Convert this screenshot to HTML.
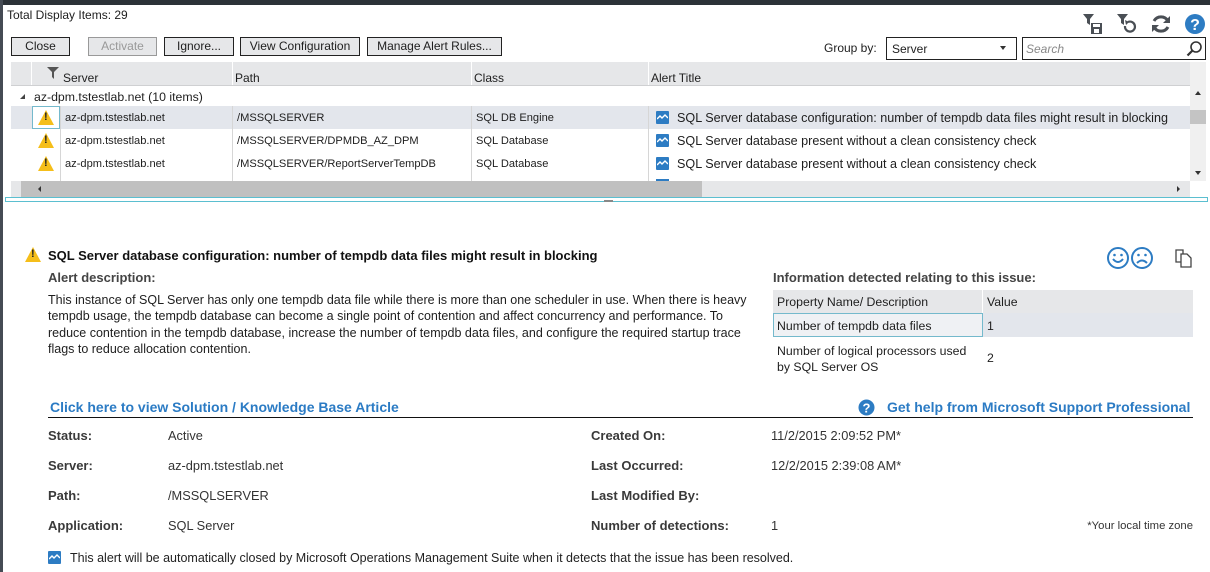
<!DOCTYPE html>
<html><head><meta charset="utf-8"><style>
*{margin:0;padding:0;box-sizing:border-box}
body{width:1210px;height:572px;overflow:hidden;background:#fff;font-family:"Liberation Sans",Arial,sans-serif;font-size:12px;color:#1e1e1e;position:relative}
.a{position:absolute;white-space:nowrap}
.btn{position:absolute;top:37px;height:19px;border:1px solid #222;background:#e6e7e9;text-align:center;line-height:17px;font-size:12px}
.hd{position:absolute;top:62px;height:24px;background:#e6e7e9}
.c{position:absolute;line-height:23px;font-size:11.1px}
.vl{position:absolute;width:1px;background:#d6d6d6}
.warn{position:absolute;width:0;height:0;border-left:8px solid transparent;border-right:8px solid transparent;border-bottom:15px solid #f5be1a}
.warn:after{content:"!";position:absolute;left:-2px;top:1px;font:bold 11px "Liberation Sans",sans-serif;color:#222}
.ai{position:absolute;width:13px;height:13px;background:#2d7cc3;border-radius:1px}
.ai svg{position:absolute;left:1px;top:2px}
.lb{position:absolute;font-weight:bold;color:#3a3a3a;font-size:13px;line-height:14px;white-space:nowrap}
.vv{position:absolute;color:#333;font-size:12.8px;line-height:14px;white-space:nowrap}
</style></head><body>
<div class="a" style="left:0;top:0;width:1210px;height:5px;background:#2c3238"></div>
<div class="a" style="left:0;top:0;width:3px;height:572px;background:#454b54"></div>
<div class="a" style="left:7px;top:8px;font-size:12px">Total Display Items: 29</div>

<div class="btn" style="left:11px;width:59px">Close</div>
<div class="btn" style="left:88px;width:69px;border-color:#999;color:#999">Activate</div>
<div class="btn" style="left:164px;width:70px">Ignore...</div>
<div class="btn" style="left:240px;width:120px">View Configuration</div>
<div class="btn" style="left:367px;width:135px">Manage Alert Rules...</div>

<svg class="a" style="left:1082px;top:13px" width="22" height="22" viewBox="0 0 22 22"><path d="M1 1h11l-4 5v6l-3-2V6z" fill="#4a4f55"/><rect x="9" y="10" width="11" height="11" fill="#4a4f55"/><rect x="11" y="11" width="7" height="3" fill="#fff"/><rect x="12" y="16" width="5" height="4" fill="#fff"/></svg>
<svg class="a" style="left:1116px;top:13px" width="22" height="22" viewBox="0 0 22 22"><path d="M1 1h11l-4 5v6l-3-2V6z" fill="#4a4f55"/><path d="M12 9a5 5 0 1 1-3 4" fill="none" stroke="#4a4f55" stroke-width="2.2"/><path d="M9 7l4 2-3 3z" fill="#4a4f55"/></svg>
<svg class="a" style="left:1150px;top:13px" width="22" height="22" viewBox="0 0 22 22"><path d="M18 8A8 8 0 0 0 4 8M4 14a8 8 0 0 0 14 0" fill="none" stroke="#4a4f55" stroke-width="3"/><path d="M20 3v7h-7z" fill="#4a4f55"/><path d="M2 19v-7h7z" fill="#4a4f55"/></svg>
<svg class="a" style="left:1184px;top:13px" width="22" height="22" viewBox="0 0 22 22"><circle cx="11" cy="11" r="10" fill="#2d7cc3"/><text x="11" y="17" text-anchor="middle" font-family="Liberation Sans" font-weight="bold" font-size="16" fill="#fff">?</text></svg>

<div class="a" style="left:824px;top:41px;font-size:12px">Group by:</div>
<div class="a" style="left:886px;top:37px;width:131px;height:23px;border:1px solid #222;padding:4px 5px;font-size:12px">Server<span style="position:absolute;right:10px;top:8px;border-left:3.5px solid transparent;border-right:3.5px solid transparent;border-top:4px solid #333"></span></div>
<div class="a" style="left:1022px;top:37px;width:184px;height:23px;border:1px solid #222;padding:4px 3px;font-size:12px;color:#888;font-style:italic">Search
<svg style="position:absolute;right:2px;top:2px" width="17" height="17" viewBox="0 0 17 17"><circle cx="10" cy="7" r="5" fill="none" stroke="#333" stroke-width="1.6"/><path d="M6.5 10.5L1.5 15.5" stroke="#333" stroke-width="2.2"/></svg></div>

<div class="hd" style="left:11px;width:1179px"></div>
<div class="a" style="left:1190px;top:62px;width:16px;height:119px;background:#f0f0f0"></div>
<div class="a" style="left:1190px;top:110px;width:16px;height:14px;background:#c4c4c4"></div>
<div class="a" style="left:1195px;top:91px;border-left:3px solid transparent;border-right:3px solid transparent;border-bottom:4px solid #333"></div>
<div class="a" style="left:1195px;top:171px;border-left:3px solid transparent;border-right:3px solid transparent;border-top:4px solid #333"></div>
<div class="vl" style="left:31px;top:62px;height:24px;background:#fff"></div>
<div class="vl" style="left:232px;top:62px;height:24px;background:#fff"></div>
<div class="vl" style="left:471px;top:62px;height:24px;background:#fff"></div>
<div class="vl" style="left:648px;top:62px;height:24px;background:#fff"></div>
<div class="a" style="left:11px;top:85px;width:1179px;height:1px;background:#cfd0d2"></div>
<svg class="a" style="left:47px;top:67px" width="12" height="12" viewBox="0 0 12 12"><path d="M0 0h12L7 5v7L5 10V5z" fill="#555"/></svg>
<div class="c" style="left:63px;top:67px;font-size:12px">Server</div>
<div class="c" style="left:235px;top:67px;font-size:12px">Path</div>
<div class="c" style="left:474px;top:67px;font-size:12px">Class</div>
<div class="c" style="left:651px;top:67px;font-size:12px">Alert Title</div>

<div class="a" style="left:20px;top:94px;border-left:5px solid transparent;border-bottom:5px solid #444"></div>
<div class="c" style="left:34px;top:86px;font-size:12.3px">az-dpm.tstestlab.net (10 items)</div>

<div class="a" style="left:11px;top:106px;width:1179px;height:23px;background:#e3e6ec"></div>
<div class="a" style="left:32px;top:106px;width:28px;height:23px;border:1px solid #74b9cc;background:#fff"></div>
<div class="vl" style="left:60px;top:106px;height:75px"></div>
<div class="vl" style="left:232px;top:106px;height:75px"></div>
<div class="vl" style="left:471px;top:106px;height:75px"></div>
<div class="vl" style="left:648px;top:106px;height:75px"></div>

<div class="warn" style="left:38px;top:110px"></div>
<div class="warn" style="left:38px;top:133px"></div>
<div class="warn" style="left:38px;top:156px"></div>

<div class="c" style="left:65px;top:107px">az-dpm.tstestlab.net</div>
<div class="c" style="left:237px;top:107px">/MSSQLSERVER</div>
<div class="c" style="left:476px;top:107px">SQL DB Engine</div>
<div class="ai" style="left:656px;top:111px"><svg width="11" height="9" viewBox="0 0 11 9"><path d="M0 6l3-3 2 2 3-3 3 3" fill="none" stroke="#fff" stroke-width="1.4"/></svg></div>
<div class="c" style="left:677px;top:107px;font-size:12.6px">SQL Server database configuration: number of tempdb data files might result in blocking</div>

<div class="c" style="left:65px;top:130px">az-dpm.tstestlab.net</div>
<div class="c" style="left:237px;top:130px">/MSSQLSERVER/DPMDB_AZ_DPM</div>
<div class="c" style="left:476px;top:130px">SQL Database</div>
<div class="ai" style="left:656px;top:134px"><svg width="11" height="9" viewBox="0 0 11 9"><path d="M0 6l3-3 2 2 3-3 3 3" fill="none" stroke="#fff" stroke-width="1.4"/></svg></div>
<div class="c" style="left:677px;top:130px;font-size:12.6px">SQL Server database present without a clean consistency check</div>

<div class="c" style="left:65px;top:153px">az-dpm.tstestlab.net</div>
<div class="c" style="left:237px;top:153px">/MSSQLSERVER/ReportServerTempDB</div>
<div class="c" style="left:476px;top:153px">SQL Database</div>
<div class="ai" style="left:656px;top:157px"><svg width="11" height="9" viewBox="0 0 11 9"><path d="M0 6l3-3 2 2 3-3 3 3" fill="none" stroke="#fff" stroke-width="1.4"/></svg></div>
<div class="c" style="left:677px;top:153px;font-size:12.6px">SQL Server database present without a clean consistency check</div>
<div class="a" style="left:656px;top:179px;width:13px;height:2px;background:#2d7cc3"></div>

<div class="a" style="left:11px;top:181px;width:1179px;height:16px;background:#e6e7e9"></div>
<div class="a" style="left:21px;top:181px;width:681px;height:16px;background:#c0c0c0"></div>
<div class="a" style="left:38px;top:186px;border-top:3px solid transparent;border-bottom:3px solid transparent;border-right:3px solid #333"></div>
<div class="a" style="left:1177px;top:186px;border-top:3px solid transparent;border-bottom:3px solid transparent;border-left:3px solid #333"></div>
<div class="a" style="left:5px;top:197px;width:1203px;height:5px;border:1px solid #5bbfd0"></div>
<div class="a" style="left:604px;top:200px;width:9px;height:2px;background:#888"></div>

<div class="warn" style="left:25px;top:247px"></div>
<div class="a" style="left:48px;top:248px;font-weight:bold;font-size:13px;color:#111">SQL Server database configuration: number of tempdb data files might result in blocking</div>
<div class="a" style="left:48px;top:270px;font-weight:bold;font-size:13px;color:#444">Alert description:</div>
<div class="a" style="left:48px;top:292px;width:712px;white-space:normal;line-height:16.3px;font-size:12.5px;color:#1e1e1e">This instance of SQL Server has only one tempdb data file while there is more than one scheduler in use. When there is heavy tempdb usage, the tempdb database can become a single point of contention and affect concurrency and performance. To reduce contention in the tempdb database, increase the number of tempdb data files, and configure the required startup trace flags to reduce allocation contention.</div>

<svg class="a" style="left:1106px;top:246px" width="50" height="24" viewBox="0 0 50 24"><g fill="none" stroke="#2d7cc3" stroke-width="2"><circle cx="12" cy="12" r="10"/><circle cx="36" cy="12" r="10"/><path d="M7 13q5 6 10 0"/><path d="M31 17q5-5 10 0"/></g><g fill="#2d7cc3"><circle cx="8.5" cy="9" r="1.3"/><circle cx="15.5" cy="9" r="1.3"/><circle cx="32.5" cy="9" r="1.3"/><circle cx="39.5" cy="9" r="1.3"/></g></svg>
<svg class="a" style="left:1174px;top:248px" width="20" height="20" viewBox="0 0 20 20"><g fill="#fff" stroke="#444" stroke-width="1.3"><path d="M2 2h7v12H2z"/><path d="M7 6h6l4 4v9H7z"/></g></svg>

<div class="a" style="left:773px;top:270px;font-weight:bold;font-size:13px;color:#444">Information detected relating to this issue:</div>
<div class="a" style="left:773px;top:290px;width:420px;height:23px;background:#e6e7e9"></div>
<div class="a" style="left:982px;top:290px;width:1px;height:23px;background:#fff"></div>
<div class="a" style="left:777px;top:295px;font-size:12.3px">Property Name/ Description</div>
<div class="a" style="left:987px;top:295px;font-size:12.3px">Value</div>
<div class="a" style="left:773px;top:313px;width:420px;height:24px;background:#e3e6ec"></div>
<div class="a" style="left:773px;top:313px;width:210px;height:24px;background:#eff1f4;border:1px solid #74b9cc"></div>
<div class="a" style="left:777px;top:319px;font-size:12.3px">Number of tempdb data files</div>
<div class="a" style="left:987px;top:319px;font-size:12.3px">1</div>
<div class="a" style="left:777px;top:343px;line-height:16px;font-size:12.3px">Number of logical processors used<br>by SQL Server OS</div>
<div class="a" style="left:987px;top:351px;font-size:12.3px">2</div>

<div class="a" style="left:50px;top:399px;font-weight:bold;font-size:14px;color:#2b7bc4">Click here to view Solution / Knowledge Base Article</div>
<svg class="a" style="left:858px;top:399px" width="17" height="17" viewBox="0 0 17 17"><circle cx="8.5" cy="8.5" r="8" fill="#2d7cc3"/><text x="8.5" y="13.5" text-anchor="middle" font-family="Liberation Sans" font-weight="bold" font-size="13" fill="#fff">?</text></svg>
<div class="a" style="left:887px;top:399px;font-weight:bold;font-size:14px;color:#2b7bc4">Get help from Microsoft Support Professional</div>
<div class="a" style="left:48px;top:417px;width:1145px;height:1px;background:#111"></div>

<div class="lb" style="left:48px;top:429px">Status:</div><div class="vv" style="left:168px;top:429px">Active</div>
<div class="lb" style="left:48px;top:459px">Server:</div><div class="vv" style="left:168px;top:459px">az-dpm.tstestlab.net</div>
<div class="lb" style="left:48px;top:489px">Path:</div><div class="vv" style="left:168px;top:489px">/MSSQLSERVER</div>
<div class="lb" style="left:48px;top:519px">Application:</div><div class="vv" style="left:168px;top:519px">SQL Server</div>

<div class="lb" style="left:591px;top:429px">Created On:</div><div class="vv" style="left:771px;top:429px">11/2/2015 2:09:52 PM*</div>
<div class="lb" style="left:591px;top:459px">Last Occurred:</div><div class="vv" style="left:771px;top:459px">12/2/2015 2:39:08 AM*</div>
<div class="lb" style="left:591px;top:489px">Last Modified By:</div>
<div class="lb" style="left:591px;top:519px">Number of detections:</div><div class="vv" style="left:771px;top:519px">1</div>
<div class="a" style="left:1073px;top:520px;width:120px;text-align:right;font-size:11.3px;color:#333">*Your local time zone</div>

<div class="ai" style="left:48px;top:551px"><svg width="11" height="9" viewBox="0 0 11 9"><path d="M0 6l3-3 2 2 3-3 3 3" fill="none" stroke="#fff" stroke-width="1.4"/></svg></div>
<div class="a" style="left:70px;top:551px;font-size:12.5px;color:#222">This alert will be automatically closed by Microsoft Operations Management Suite when it detects that the issue has been resolved.</div>
</body></html>
